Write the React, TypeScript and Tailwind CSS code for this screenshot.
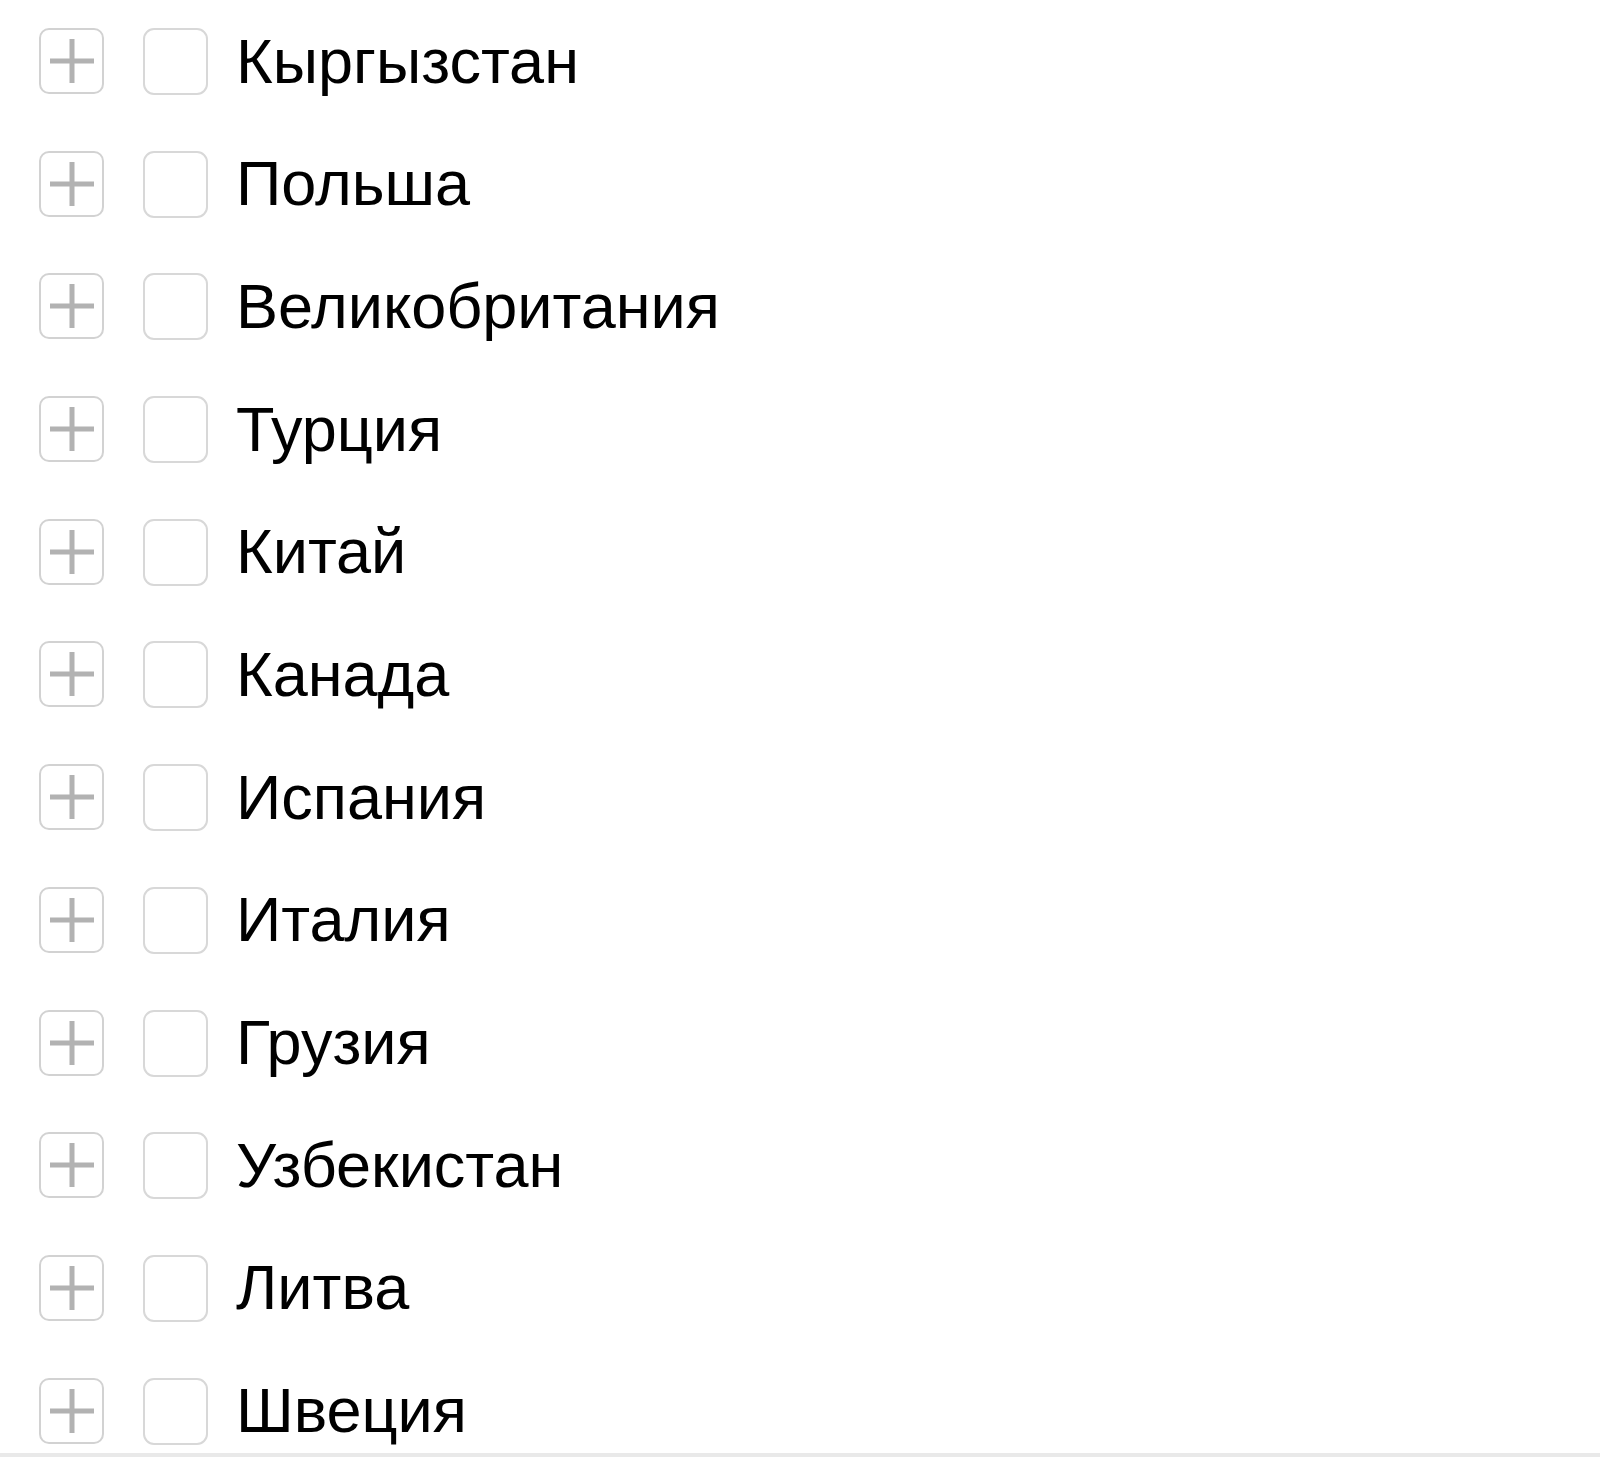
import React from "react";

const countries = [
  "Кыргызстан",
  "Польша",
  "Великобритания",
  "Турция",
  "Китай",
  "Канада",
  "Испания",
  "Италия",
  "Грузия",
  "Узбекистан",
  "Литва",
  "Швеция",
];

function PlusBox() {
  return (
    <div className="w-[65px] h-[66px] shrink-0 rounded-[10px] border-2 border-[#d2d2d2] bg-white flex items-center justify-center">
      <svg width="44" height="44" viewBox="0 0 44 44">
        <rect x="19.5" y="0" width="5" height="44" fill="#b2b2b2" />
        <rect x="0" y="19.5" width="44" height="5" fill="#b2b2b2" />
      </svg>
    </div>
  );
}

function CheckBox() {
  return (
    <div className="w-[65px] h-[67px] shrink-0 rounded-[11px] border-2 border-[#d8d8d8] bg-white" />
  );
}

export default function App() {
  return (
    <div className="w-[1600px] h-[1473px] bg-white" style={{ fontFamily: '"Liberation Sans", Arial, sans-serif' }}>
      <div className="border-b-4 border-[#e9e9e9]">
        {countries.map((c, i) => (
          <div
            key={c}
            className={
              i === countries.length - 1
                ? "h-[103px] flex items-start pt-[28px] pl-[39px]"
                : "h-[122.7px] flex items-start pt-[28px] pl-[39px]"
            }
          >
            <PlusBox />
            <div className="w-[39px] shrink-0" />
            <CheckBox />
            <div className="ml-[28px] h-[66px] flex items-center text-[63px] leading-none text-black">
              {c}
            </div>
          </div>
        ))}
      </div>
    </div>
  );
}
